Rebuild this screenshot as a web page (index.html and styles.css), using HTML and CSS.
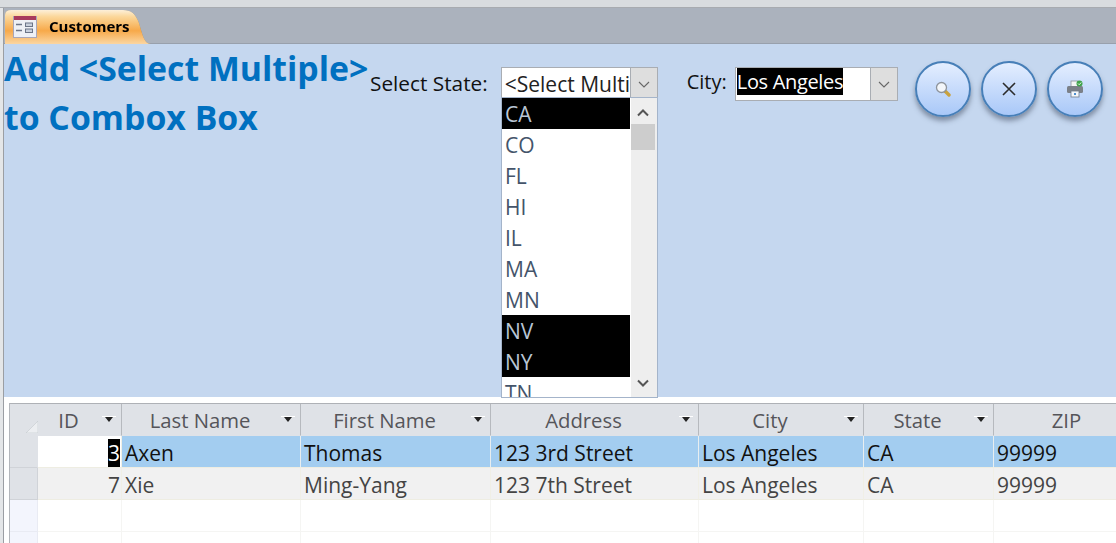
FILE: index.html
```html
<!DOCTYPE html>
<html lang="en">
<head>
<meta charset="utf-8">
<title>Customers</title>
<link rel="stylesheet" href="styles.css">
</head>
<body>
<div class="app">
  <div class="ribbon-edge"></div>
  <div class="main">
    <div class="tabstrip">
      <div class="tab-outline">
        <div class="tab">
          <svg class="tab-icon" width="24" height="24" viewBox="0 0 24 24">
            <rect x="0.5" y="1.5" width="23" height="21" fill="#eef0f5" stroke="#a9a6b8"/>
            <rect x="1" y="1" width="22" height="4" fill="#a83a5c"/>
            <path d="M3 9.5h6M3 15.500h6" stroke="#6c7587" stroke-width="1.4"/>
            <rect x="12.500" y="8" width="7" height="3.500" fill="#c9d0dc" stroke="#6c7587"/>
            <rect x="12.500" y="14" width="7" height="3.500" fill="#c9d0dc" stroke="#6c7587"/>
          </svg>
          <span class="tab-label">Customers</span>
        </div>
      </div>
    </div>
    <div class="form">
      <h1 class="title">Add &lt;Select Multiple&gt;<br>to Combox Box</h1>
      <div class="state-field">
        <span class="label state-label">Select State:</span>
        <div class="combo state-combo">
          <span class="combo-text state-text">&lt;Select Multi</span>
          <span class="combo-btn"><svg width="12" height="7" viewBox="0 0 12 7"><path d="M1 1l5 5 5-5" fill="none" stroke="#666" stroke-width="1.100"/></svg></span>
        </div>
      </div>
      <div class="city-field">
        <span class="label city-label">City:</span>
        <div class="combo city-combo">
          <span class="combo-text city-text"><span class="sel">Los Angeles</span></span>
          <span class="combo-btn"><svg width="12" height="7" viewBox="0 0 12 7"><path d="M1 1l5 5 5-5" fill="none" stroke="#666" stroke-width="1.100"/></svg></span>
        </div>
      </div>
      <div class="buttons">
        <div class="round">
          <svg width="16" height="16" viewBox="0 0 16 16">
            <path d="M10 10l4 4" stroke="#c9a23e" stroke-width="3.400" stroke-linecap="round"/>
            <circle cx="6.500" cy="6.500" r="5" fill="#f3f6fa" stroke="#8e949c" stroke-width="1.300"/>
          </svg>
        </div>
        <div class="round">
          <svg width="14" height="14" viewBox="0 0 14 14"><path d="M1 1l12 12M13 1L1 13" stroke="#2b2b2b" stroke-width="1.600"/></svg>
        </div>
        <div class="round">
          <svg width="18" height="18" viewBox="0 0 18 18">
            <rect x="5" y="1" width="7" height="6" fill="#f4f4f4" stroke="#8a8f96" stroke-width=".8"/>
            <rect x="1" y="6" width="16" height="7" rx="1.500" fill="#7b8088"/>
            <rect x="5" y="11" width="8" height="6" fill="#f4f7fb" stroke="#6f7c8c" stroke-width=".8"/>
            <rect x="8" y="13" width="2" height="2" fill="#4d8fd0"/>
            <circle cx="13.500" cy="3.500" r="3" fill="#3fa34a"/>
            <path d="M12 3.500l1.200 1.200 2-2.200" fill="none" stroke="#fff" stroke-width=".9"/>
          </svg>
        </div>
      </div>
      <div class="dropdown">
        <div class="options">
          <div class="opt on">CA</div>
          <div class="opt">CO</div>
          <div class="opt">FL</div>
          <div class="opt">HI</div>
          <div class="opt">IL</div>
          <div class="opt">MA</div>
          <div class="opt">MN</div>
          <div class="opt on">NV</div>
          <div class="opt on">NY</div>
          <div class="opt">TN</div>
        </div>
        <div class="scrollbar">
          <svg class="arrow" width="12" height="8" viewBox="0 0 12 8"><path d="M1 6.500l5-5 5 5" fill="none" stroke="#555" stroke-width="2"/></svg>
          <div class="thumb"></div>
          <svg class="arrow arrow-down" width="12" height="8" viewBox="0 0 12 8"><path d="M1 1.500l5 5 5-5" fill="none" stroke="#555" stroke-width="2"/></svg>
        </div>
      </div>
    </div>
    <div class="gap"></div>
    <div class="grid">
      <div class="row head">
        <div class="c sel-col corner"><svg width="12" height="12" viewBox="0 0 12 12"><path d="M0 12L12 0v12z" fill="#eceef1" stroke="#c5c9cf" stroke-width=".6"/></svg></div>
        <div class="c hd">ID<i class="caret"></i></div>
        <div class="c hd">Last Name<i class="caret"></i></div>
        <div class="c hd">First Name<i class="caret"></i></div>
        <div class="c hd">Address<i class="caret"></i></div>
        <div class="c hd">City<i class="caret"></i></div>
        <div class="c hd">State<i class="caret"></i></div>
        <div class="c hd hd-plain">ZIP</div>
      </div>
      <div class="row current">
        <div class="c sel-col"></div>
        <div class="c num idcell"><span class="sel">3</span></div>
        <div class="c">Axen</div>
        <div class="c">Thomas</div>
        <div class="c">123 3rd Street</div>
        <div class="c">Los Angeles</div>
        <div class="c">CA</div>
        <div class="c">99999</div>
      </div>
      <div class="row alt">
        <div class="c sel-col"></div>
        <div class="c num">7</div>
        <div class="c">Xie</div>
        <div class="c">Ming-Yang</div>
        <div class="c">123 7th Street</div>
        <div class="c">Los Angeles</div>
        <div class="c">CA</div>
        <div class="c">99999</div>
      </div>
      <div class="row empty">
        <div class="c sel-col"></div><div class="c"></div><div class="c"></div><div class="c"></div><div class="c"></div><div class="c"></div><div class="c"></div><div class="c"></div>
      </div>
      <div class="row empty">
        <div class="c sel-col"></div><div class="c"></div><div class="c"></div><div class="c"></div><div class="c"></div><div class="c"></div><div class="c"></div><div class="c"></div>
      </div>
    </div>
  </div>
</div>
</body>
</html>
```
FILE: styles.css
```css
html, body {
  margin: 0;
  padding: 0;
  background: #fff;
}
.app {
  width: 1116px;
  height: 543px;
  overflow: hidden;
  display: flex;
  flex-direction: column;
  font-family: "Open Sans", "Noto Sans", sans-serif;
  color: #222;
}
.ribbon-edge {
  height: 7px;
  flex: none;
  background: #d9dcdf;
  border-bottom: 1px solid #a8abb0;
}
.main {
  flex: 1;
  min-height: 0;
  display: flex;
  flex-direction: column;
  border-left: 1px solid #9b9ea3;
  margin-left: 3px;
  box-shadow: -3px 0 0 #e4e6e8;
}
.tabstrip {
  height: 35px;
  flex: none;
  background: #abb2bd;
  border-bottom: 1px solid #98a0ac;
  padding-left: 1px;
  display: flex;
  align-items: flex-end;
}
.tab-outline {
  margin-bottom: -1px;
  filter: drop-shadow(0 0 .6px #8a8478);
}
.tab {
  box-sizing: border-box;
  width: 146px;
  height: 35px;
  padding-left: 8px;
  display: flex;
  align-items: center;
  gap: 12px;
  clip-path: path("M0 35 V6 Q0 1 6 1 H118 C126 1 130 4 134 14 C137 24 139 35 146 35 Z");
  background: linear-gradient(#fdf3e2 0%, #fbd79a 22%, #f7a94a 62%, #fbd6a2 100%);
}
.tab-icon {
  flex: none;
}
.tab-label {
  font-size: 15px;
  line-height: 20px;
  margin-top: -2px;
  font-weight: 700;
  color: #000;
}
.form {
  position: relative;
  height: 353px;
  flex: none;
  background: #c5d7ef;
  display: flex;
  align-items: flex-start;
}
.title {
  margin: 0;
  width: 366px;
  flex: none;
  font-size: 33.800px;
  line-height: 49px;
  font-weight: 700;
  color: #0070c0;
  white-space: nowrap;
}
.label {
  color: #111;
  white-space: nowrap;
}
.state-field {
  display: flex;
  align-items: flex-start;
  gap: 13px;
  margin-top: 23px;
  flex: none;
}
.state-label {
  font-size: 20.800px;
  line-height: 32px;
}
.city-field {
  display: flex;
  align-items: flex-start;
  gap: 8px;
  margin-top: 23px;
  margin-left: 29px;
  flex: none;
}
.city-label {
  font-size: 20px;
  line-height: 30px;
}
.combo {
  display: flex;
  box-sizing: border-box;
  height: 34px;
  background: #fff;
  border: 1px solid #a9adb3;
  font-size: 20px;
}
.state-combo {
  width: 157px;
}
.city-combo {
  width: 163px;
}
.combo-text {
  flex: 1;
  min-width: 0;
  overflow: hidden;
  white-space: nowrap;
  padding: 0 0 0 3px;
  line-height: 30px;
}
.state-text {
  font-size: 21px;
  line-height: 32px;
}
.city-text {
  padding-left: 1px;
  line-height: 28px;
  letter-spacing: -.33px;
}
.sel {
  background: #000;
  color: #fff;
}
.combo-btn {
  flex: none;
  width: 26px;
  background: #dedede;
  border-left: 1px solid #a9adb3;
  display: flex;
  align-items: center;
  justify-content: center;
}
.buttons {
  display: flex;
  gap: 10px;
  margin-top: 17px;
  margin-left: 17px;
  flex: none;
}
.round {
  box-sizing: border-box;
  width: 56px;
  height: 56px;
  border-radius: 50%;
  border: 2px solid #477fb8;
  background: linear-gradient(#e4eeff, #a9c8f8);
  box-shadow: 0 4px 5px rgba(60,70,90,.5);
  display: flex;
  align-items: center;
  justify-content: center;
}
.dropdown {
  position: absolute;
  left: 497px;
  top: 53px;
  width: 157px;
  height: 301px;
  box-sizing: border-box;
  background: #fff;
  border: 1px solid #a4b4ca;
  display: flex;
  overflow: hidden;
}
.options {
  flex: 1;
  min-width: 0;
}
.opt {
  height: 31px;
  line-height: 33px;
  padding-left: 3px;
  font-size: 21px;
  color: #44546a;
}
.opt.on {
  background: #000;
  color: #b9c6d6;
}
.scrollbar {
  flex: none;
  width: 26px;
  margin-left: 1px;
  background: #eeeeee;
  display: flex;
  flex-direction: column;
  align-items: flex-start;
}
.arrow {
  margin: 11px 0 0 6px;
  flex: none;
}
.thumb {
  width: 24px;
  height: 26px;
  margin-top: 7px;
  background: #cdcdcd;
}
.arrow-down {
  margin-top: auto;
  margin-bottom: 10px;
}
.gap {
  height: 6px;
  flex: none;
  background: #fff;
}
.grid {
  margin-left: 5px;
  flex: 1;
  min-height: 0;
  border-left: 1px solid #b3b6bb;
  border-top: 1px solid #aeb1b6;
  overflow: hidden;
}
.row {
  display: grid;
  grid-template-columns: 28px 84px 179px 190px 208px 165px 130px 146px;
  height: 32px;
  font-size: 21px;
  line-height: 35px;
}
.c {
  box-sizing: border-box;
  padding-left: 3px;
  border-right: 1px solid #f0efe6;
  border-bottom: 1px solid #eeede2;
  white-space: nowrap;
  overflow: hidden;
  min-width: 0;
}
.head {
  font-size: 20.300px;
  line-height: 33px;
}
.head .c {
  background: #dfe2e7;
  border-right: 1px solid #b6b9be;
  border-bottom: 1px solid #dfe2e7;
  color: #55555a;
  text-align: center;
  padding: 0 22px 0 0;
  position: relative;
}
.head .hd-plain {
  padding: 0;
}
.head .corner {
  border-right: 0;
  width: 28px;
  padding: 0;
  text-align: right;
}
.corner svg {
  margin-top: 17px;
  vertical-align: top;
}
.caret {
  position: absolute;
  right: 8px;
  top: 13px;
  width: 0;
  height: 0;
  border: 4px solid transparent;
  border-top: 5px solid #222;
  border-bottom: 0;
}
.caret::before {
  content: "";
  position: absolute;
  left: -7px;
  top: -6px;
  width: 14px;
  height: 1px;
  background: #fff;
}
.sel-col {
  padding: 0;
  background: #dfe2e7;
  border-right: 1px solid #d0d3d8;
  border-bottom: 1px solid #d0d3d8;
}
.head + .row .sel-col {
  border-right-color: #dfe2e7;
}
.num {
  text-align: right;
  padding: 0 1px 0 0;
}
.current .c:not(.sel-col):not(.idcell) {
  background: #a3cdf0;
  color: #111;
  border-right-color: #e8eef0;
}
.idcell {
  background: #fff;
}
.alt .c:not(.sel-col) {
  background: #f1f1f1;
  color: #444;
}
.empty .sel-col {
  background: #f3f5fd;
  border-color: #e9ebf3;
}
.empty .c:not(.sel-col) {
  border-color: #f5f5f3;
}
```
